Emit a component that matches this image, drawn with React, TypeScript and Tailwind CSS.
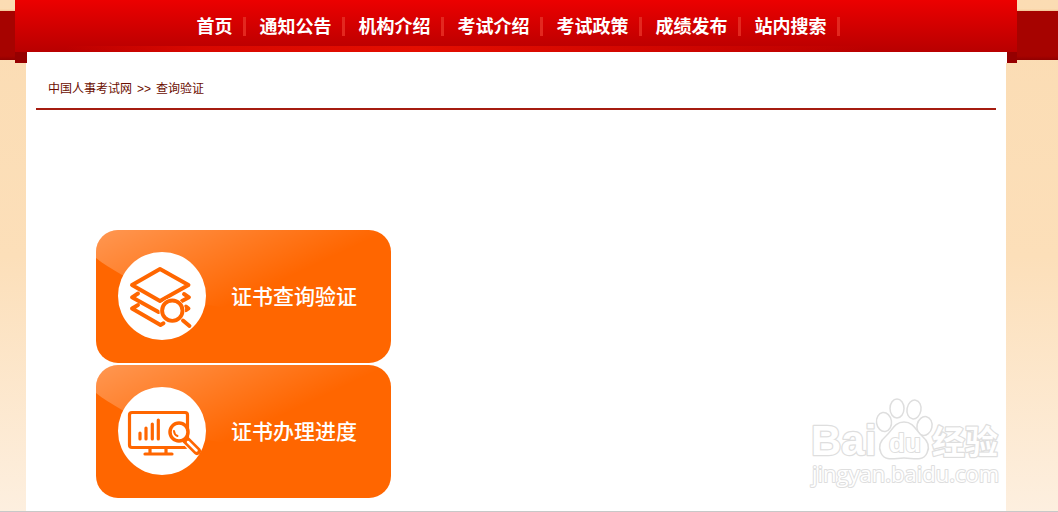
import type { ReactNode } from "react";

const navItems = ["首页", "通知公告", "机构介绍", "考试介绍", "考试政策", "成绩发布", "站内搜索"];

function LayersSearchIcon() {
  return (
    <svg viewBox="0 0 88 88" className="size-[88px]" fill="none" stroke="#ff6600" strokeWidth="3.900" strokeLinecap="round" strokeLinejoin="round" aria-hidden="true">
      <path d="M42 17 70.500 33 42 49 14 33Z" />
      <path d="M20 41.500 14 45.300 40.500 60" />
      <path d="M66 42 71 45.300 64 49" />
      <path d="M20 53 14 56.500 42.500 73 45.500 71.300" />
      <path d="m68 54.500 2.500 2-2.500 1.700" />
      <circle cx="54.300" cy="58.700" r="12.800" fill="#fff" stroke="none" />
      <circle cx="54.300" cy="58.700" r="10.200" />
      <path d="m65 68.500 6.500 5.500" />
    </svg>
  );
}

function MonitorSearchIcon() {
  return (
    <svg viewBox="0 0 88 88" className="size-[88px]" fill="none" stroke="#ff6600" strokeWidth="3.200" strokeLinecap="round" strokeLinejoin="round" aria-hidden="true">
      <rect x="11.500" y="25.500" width="58" height="35" rx="2.500" />
      <path d="M32 61v6M48 61v6M27 67h27" />
      <path d="M22 46v6M28 41v11M34.300 37v15M40.300 33v19" />
      <path d="m68 53 9 9.500" stroke="#fff" strokeWidth="10" strokeLinecap="butt" />
      <path d="m67.500 52.500 11.500 11.500" strokeWidth="8" />
      <path d="m70 55 8.500 8.500" stroke="#fff" strokeWidth="2.500" />
      <circle cx="61" cy="45" r="9" fill="#fff" strokeWidth="3.500" />
      <path d="M56 44c.2 2.500 1.500 4.200 3.500 5" strokeWidth="2" />
    </svg>
  );
}

function ServiceCard({ id, label, icon }: { id: string; label: string; icon: ReactNode }) {
  return (
    <a href="#" className="relative flex h-[133px] w-[295px] items-center gap-[25px] overflow-hidden rounded-[22px] bg-[#ff6600] pb-px pl-[22px]">
      <svg viewBox="0 0 295 133" className="absolute inset-0 size-full" aria-hidden="true">
        <defs>
          <linearGradient id={id} gradientUnits="userSpaceOnUse" x1="20" y1="0" x2="90" y2="150">
            <stop offset="0" stopColor="#fff" stopOpacity=".3" />
            <stop offset=".7" stopColor="#fff" stopOpacity="0" />
          </linearGradient>
        </defs>
        <path d="M0 0H295V60C255 80 200 84 140 79C80 73 28 50 0 28Z" fill={`url(#${id})`} />
      </svg>
      <span className="relative flex size-[88px] shrink-0 items-center justify-center rounded-full bg-white">{icon}</span>
      <span className="relative pt-0.5 text-[21px] leading-6 font-medium whitespace-nowrap text-white">{label}</span>
    </a>
  );
}

function Watermark() {
  return (
    <svg viewBox="0 0 194 94" className="pointer-events-none absolute right-1 bottom-[22px] h-[94px] w-[194px]" role="img" aria-label="Baidu 经验 jingyan.baidu.com">
      <g fill="#fff" stroke="#dedede" strokeWidth="1.500">
        <ellipse cx="76" cy="27" rx="7.500" ry="9.500" transform="rotate(-8 76 27)" />
        <ellipse cx="89" cy="13.500" rx="7" ry="9.500" />
        <ellipse cx="106" cy="14.500" rx="7" ry="9.500" transform="rotate(10 106 14.500)" />
        <ellipse cx="116.500" cy="31" rx="7.500" ry="9.500" transform="rotate(12 116.500 31)" />
        <path d="M96 27c-10 0-12 9-18 14-6 5-8 11-5 17 4 9 14 5 23 5s19 4 23-5c3-6 1-12-5-17-6-5-8-14-18-14Z" />
      </g>
      <g fill="#fff" stroke="#dedede" strokeWidth="2.500" paintOrder="stroke" strokeLinejoin="round">
        <text x="3" y="60" fontSize="42" fontWeight="700" fontFamily="Liberation Sans, sans-serif">Bai</text>
        <text x="81" y="57" fontSize="26" fontWeight="700" strokeWidth="2" fontFamily="Liberation Sans, sans-serif">du</text>
        <text x="124" y="59" fontSize="33" fontWeight="700" fontFamily="Noto Sans CJK SC, sans-serif">经验</text>
        <text x="4" y="87" fontSize="22" strokeWidth="2" fontFamily="Open Sans, sans-serif">jingyan.baidu.com</text>
      </g>
    </svg>
  );
}

export default function App() {
  return (
    <div className="flex min-h-screen flex-col border-b border-[#c8c8c8] bg-linear-to-b from-[#fbdcb3] via-[#fcdfb9] to-[#fdefdf] font-['Liberation_Sans','Noto_Sans_CJK_SC',sans-serif]">
      <header className="bg-[linear-gradient(to_bottom,transparent_9px,#f3c594_11px,#a60300_11px,#a60300_56px,#900000_60px,transparent_60px)] pr-[41px] pl-[15px]">
        <nav aria-label="主导航" className="flex flex-col bg-linear-to-b from-[#ec0000] via-[#d20000] to-[#b80000]">
          <ul className="flex h-[46px] items-center justify-center pt-[7px] pl-[18px]">
            {navItems.map((item) => (
              <li key={item} className="flex items-center">
                <a href="#" className="text-lg leading-7 font-bold whitespace-nowrap text-white">{item}</a>
                <span className="mr-[14px] ml-[10px] h-[19px] w-[3px] bg-[#e3281f]" />
              </li>
            ))}
          </ul>
          <div className="h-[6px] bg-[linear-gradient(to_right,transparent_5%,#d80800_18%,#e40e00_40%,#d00600_65%,transparent_85%)]" />
        </nav>
        <div className="flex h-[11px] justify-between bg-[#960000]">
          <span className="w-3" />
          <span className="grow bg-white" />
          <span className="w-[10px]" />
        </div>
      </header>

      <main className="relative mr-[52px] ml-[26px] flex grow flex-col bg-white px-[10px] pb-[13px]">
        <div className="flex h-[47px] items-center border-b-2 border-[#a51c10] pt-[6px] pl-3">
          <nav aria-label="当前位置" className="flex gap-[5px] text-xs leading-4 text-[#6b0d00]">
            <a href="#">中国人事考试网</a>
            <span>&gt;&gt;</span>
            <span>查询验证</span>
          </nav>
        </div>
        <div className="mt-[120px] flex flex-col items-start gap-0.5 pl-[60px]">
          <ServiceCard id="shine-query" label="证书查询验证" icon={<LayersSearchIcon />} />
          <ServiceCard id="shine-progress" label="证书办理进度" icon={<MonitorSearchIcon />} />
        </div>
        <Watermark />
      </main>
    </div>
  );
}
